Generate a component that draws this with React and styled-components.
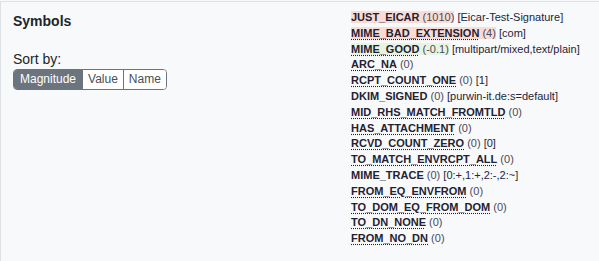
import React from "react";
import styled, { createGlobalStyle, css } from "styled-components";

const GlobalStyle = createGlobalStyle`
  html, body {
    margin: 0;
    padding: 0;
    background: #f8f9fa;
    font-family: "Liberation Sans", Arial, sans-serif;
    color: #212529;
  }
`;

const Row = styled.div`
  display: grid;
  grid-template-columns: 342px 1fr;
  margin-top: 1px;
  height: 260px;
  border-top: 1px solid #dee2e6;
  border-left: 1px solid #dee2e6;
  background: #f8f9fa;
  box-sizing: border-box;
`;

const Header = styled.div`
  padding: 9px 12px;
`;

const Title = styled.div`
  font-size: 14px;
  font-weight: bold;
  line-height: 21px;
`;

const SortLabel = styled.div`
  margin-top: 18px;
  font-size: 14px;
  line-height: 18px;
`;

const ButtonGroup = styled.div`
  display: inline-flex;
  margin-top: 1px;
  border: 1px solid #6c757d;
  border-radius: 4px;
  overflow: hidden;
`;

const SortButton = styled.button`
  font-family: inherit;
  font-size: 12px;
  line-height: 19px;
  padding: 0 ${(p) => (p.active ? 6 : 5)}px;
  margin: 0;
  border: 0;
  border-left: 1px solid #6c757d;
  background: #fff;
  color: #495057;
  &:first-child {
    border-left: 0;
  }
  ${(p) =>
    p.active &&
    css`
      background: #6c757d;
      color: #fff;
    `}
`;

const List = styled.div`
  padding: 8px 8px 0 8px;
  font-size: 11px;
  line-height: 15.8px;
`;

const Line = styled.div`
  white-space: nowrap;
`;

const Mark = styled.span`
  ${(p) =>
    p.tone === "bad" &&
    css`
      background: #fadcd5;
    `}
  ${(p) =>
    p.tone === "good" &&
    css`
      background: #e7f4e1;
    `}
`;

const Name = styled.span`
  font-weight: bold;
  color: #1f2233;
  ${(p) =>
    p.desc &&
    css`
      text-decoration: underline dotted;
      text-underline-offset: 2px;
    `}
`;

const Score = styled.span`
  color: #4a4a5c;
`;

const Options = styled.span`
  color: #23253a;
`;

const symbols = [
  { name: "JUST_EICAR", score: "1010", opts: "Eicar-Test-Signature", tone: "bad" },
  { name: "MIME_BAD_EXTENSION", score: "4", opts: "com", tone: "bad", desc: true },
  { name: "MIME_GOOD", score: "-0.1", opts: "multipart/mixed,text/plain", tone: "good", desc: true },
  { name: "ARC_NA", score: "0", desc: true },
  { name: "RCPT_COUNT_ONE", score: "0", opts: "1", desc: true },
  { name: "DKIM_SIGNED", score: "0", opts: "purwin-it.de:s=default" },
  { name: "MID_RHS_MATCH_FROMTLD", score: "0", desc: true },
  { name: "HAS_ATTACHMENT", score: "0", desc: true },
  { name: "RCVD_COUNT_ZERO", score: "0", opts: "0", desc: true },
  { name: "TO_MATCH_ENVRCPT_ALL", score: "0", desc: true },
  { name: "MIME_TRACE", score: "0", opts: "0:+,1:+,2:-,2:~" },
  { name: "FROM_EQ_ENVFROM", score: "0", desc: true },
  { name: "TO_DOM_EQ_FROM_DOM", score: "0", desc: true },
  { name: "TO_DN_NONE", score: "0", desc: true },
  { name: "FROM_NO_DN", score: "0", desc: true },
];

export default function App() {
  return (
    <>
      <GlobalStyle />
      <Row>
        <Header>
          <Title>Symbols</Title>
          <SortLabel>Sort by:</SortLabel>
          <ButtonGroup>
            <SortButton active>Magnitude</SortButton>
            <SortButton>Value</SortButton>
            <SortButton>Name</SortButton>
          </ButtonGroup>
        </Header>
        <List>
          {symbols.map((s) => (
            <Line key={s.name}>
              <Mark tone={s.tone}>
                <Name desc={s.desc}>{s.name}</Name> <Score>({s.score})</Score>
              </Mark>
              {s.opts && <Options> [{s.opts}]</Options>}
            </Line>
          ))}
        </List>
      </Row>
    </>
  );
}
